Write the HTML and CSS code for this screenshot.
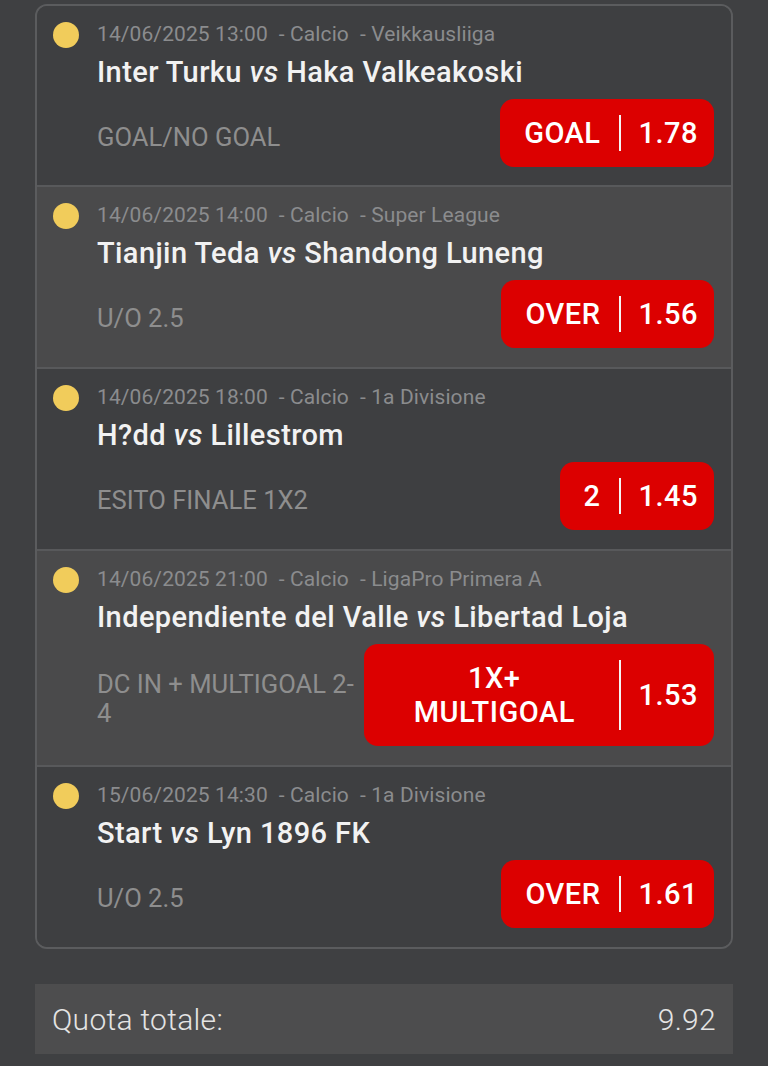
FILE: index.html
```html
<!DOCTYPE html>
<html lang='it'>
<head>
    <meta charset='UTF-8'>
    <meta name='viewport' content='width=device-width, initial-scale=1.0'>
    <title>Schedina</title>
    <link rel="stylesheet" href="styles.css">
</head>
<body>
    <div id='slip'>
        <div class='event'>
            <span class='dot'></span>
            <div class='info'>
                <div class='meta'>14/06/2025 13:00<span class='part'>- Calcio</span><span class='part'>- Veikkausliiga</span></div>
                <div class='teams'>Inter Turku <i>vs</i> Haka Valkeakoski</div>
                <div class='bottom'>
                    <div class='market'>GOAL/NO GOAL</div>
                    <div class='bet'><span class='pick'>GOAL</span><span class='sep'></span><span class='odds'>1.78</span></div>
                </div>
            </div>
        </div>
        <div class='event alt'>
            <span class='dot'></span>
            <div class='info'>
                <div class='meta'>14/06/2025 14:00<span class='part'>- Calcio</span><span class='part'>- Super League</span></div>
                <div class='teams'>Tianjin Teda <i>vs</i> Shandong Luneng</div>
                <div class='bottom'>
                    <div class='market'>U/O 2.5</div>
                    <div class='bet'><span class='pick'>OVER</span><span class='sep'></span><span class='odds'>1.56</span></div>
                </div>
            </div>
        </div>
        <div class='event'>
            <span class='dot'></span>
            <div class='info'>
                <div class='meta'>14/06/2025 18:00<span class='part'>- Calcio</span><span class='part'>- 1a Divisione</span></div>
                <div class='teams'>H?dd <i>vs</i> Lillestrom</div>
                <div class='bottom'>
                    <div class='market'>ESITO FINALE 1X2</div>
                    <div class='bet'><span class='pick'>2</span><span class='sep'></span><span class='odds'>1.45</span></div>
                </div>
            </div>
        </div>
        <div class='event alt'>
            <span class='dot'></span>
            <div class='info'>
                <div class='meta'>14/06/2025 21:00<span class='part'>- Calcio</span><span class='part'>- LigaPro Primera A</span></div>
                <div class='teams'>Independiente del Valle <i>vs</i> Libertad Loja</div>
                <div class='bottom'>
                    <div class='market'>DC IN + MULTIGOAL 2-4</div>
                    <div class='bet wide'><span class='pick'>1X+<br>MULTIGOAL</span><span class='sep'></span><span class='odds'>1.53</span></div>
                </div>
            </div>
        </div>
        <div class='event'>
            <span class='dot'></span>
            <div class='info'>
                <div class='meta'>15/06/2025 14:30<span class='part'>- Calcio</span><span class='part'>- 1a Divisione</span></div>
                <div class='teams'>Start <i>vs</i> Lyn 1896 FK</div>
                <div class='bottom'>
                    <div class='market'>U/O 2.5</div>
                    <div class='bet'><span class='pick'>OVER</span><span class='sep'></span><span class='odds'>1.61</span></div>
                </div>
            </div>
        </div>
    </div>

    <footer id='total'>
        <span>Quota totale:</span>
        <span>9.92</span>
    </footer>
</body>
</html>
```

FILE: styles.css
```css
html, body {
    margin: 0; padding: 0;
    background: #3f4042;
    font-family: Roboto, "Noto Sans", sans-serif;
}
#slip {
    margin: 4px 35px 0;
    border: 2px solid #5b5c5e;
    border-radius: 12px;
    overflow: hidden;
}
.event {
    display: flex;
    padding: 16px 17px 19px 15px;
    background: #3e3f41;
    border-top: 2px solid #58595b;
}
.event:first-child { border-top: 0; padding-bottom: 18px; }
.alt { background: #4a4a4b; }
.dot {
    flex: none;
    width: 26px; height: 26px;
    margin: 0 18px 0 1px;
    border-radius: 50%;
    background: #f1cc5b;
}
.info { flex: 1; min-width: 0; }
.meta {
    font-size: 21px; line-height: 24px;
    letter-spacing: 0.1px;
    color: #8b8c8e;
    white-space: nowrap;
}
.part { margin-left: 11px; }
.teams {
    margin-top: 10px;
    font-size: 29px; line-height: 32px;
    letter-spacing: 0.4px;
    font-weight: 500;
    color: #f2f2f2;
}
.teams i { font-weight: 500; }
.bottom {
    display: flex;
    align-items: center;
    margin-top: 11px;
}
.market {
    flex: 1;
    padding: 8px 6px 0 0;
    font-size: 25.6px; line-height: 29px;
    color: #8e8e8e;
}
.bet {
    display: flex;
    align-items: center;
    flex: none;
    background: #dc0000;
    border-radius: 14px;
    color: #fff;
    font-size: 29px; font-weight: 500;
    letter-spacing: 0.5px;
    line-height: 34px;
}
.wide { width: 350px; }
.pick {
    flex: 1;
    padding: 17px 19px 17px 24px;
    text-align: center;
}
.sep {
    flex: none;
    width: 2px; height: 36px;
    background: #f4f4f4;
}
.wide .sep { height: 70px; }
.odds { padding: 0 16px 0 17px; }
#total {
    display: flex;
    justify-content: space-between;
    align-items: center;
    margin: 35px 35px 0;
    height: 70px;
    padding: 0 17px;
    background: #4d4d4e;
    color: #e4e4e4;
    font-size: 30px; font-weight: 300;
    letter-spacing: 0.3px;
}
```
